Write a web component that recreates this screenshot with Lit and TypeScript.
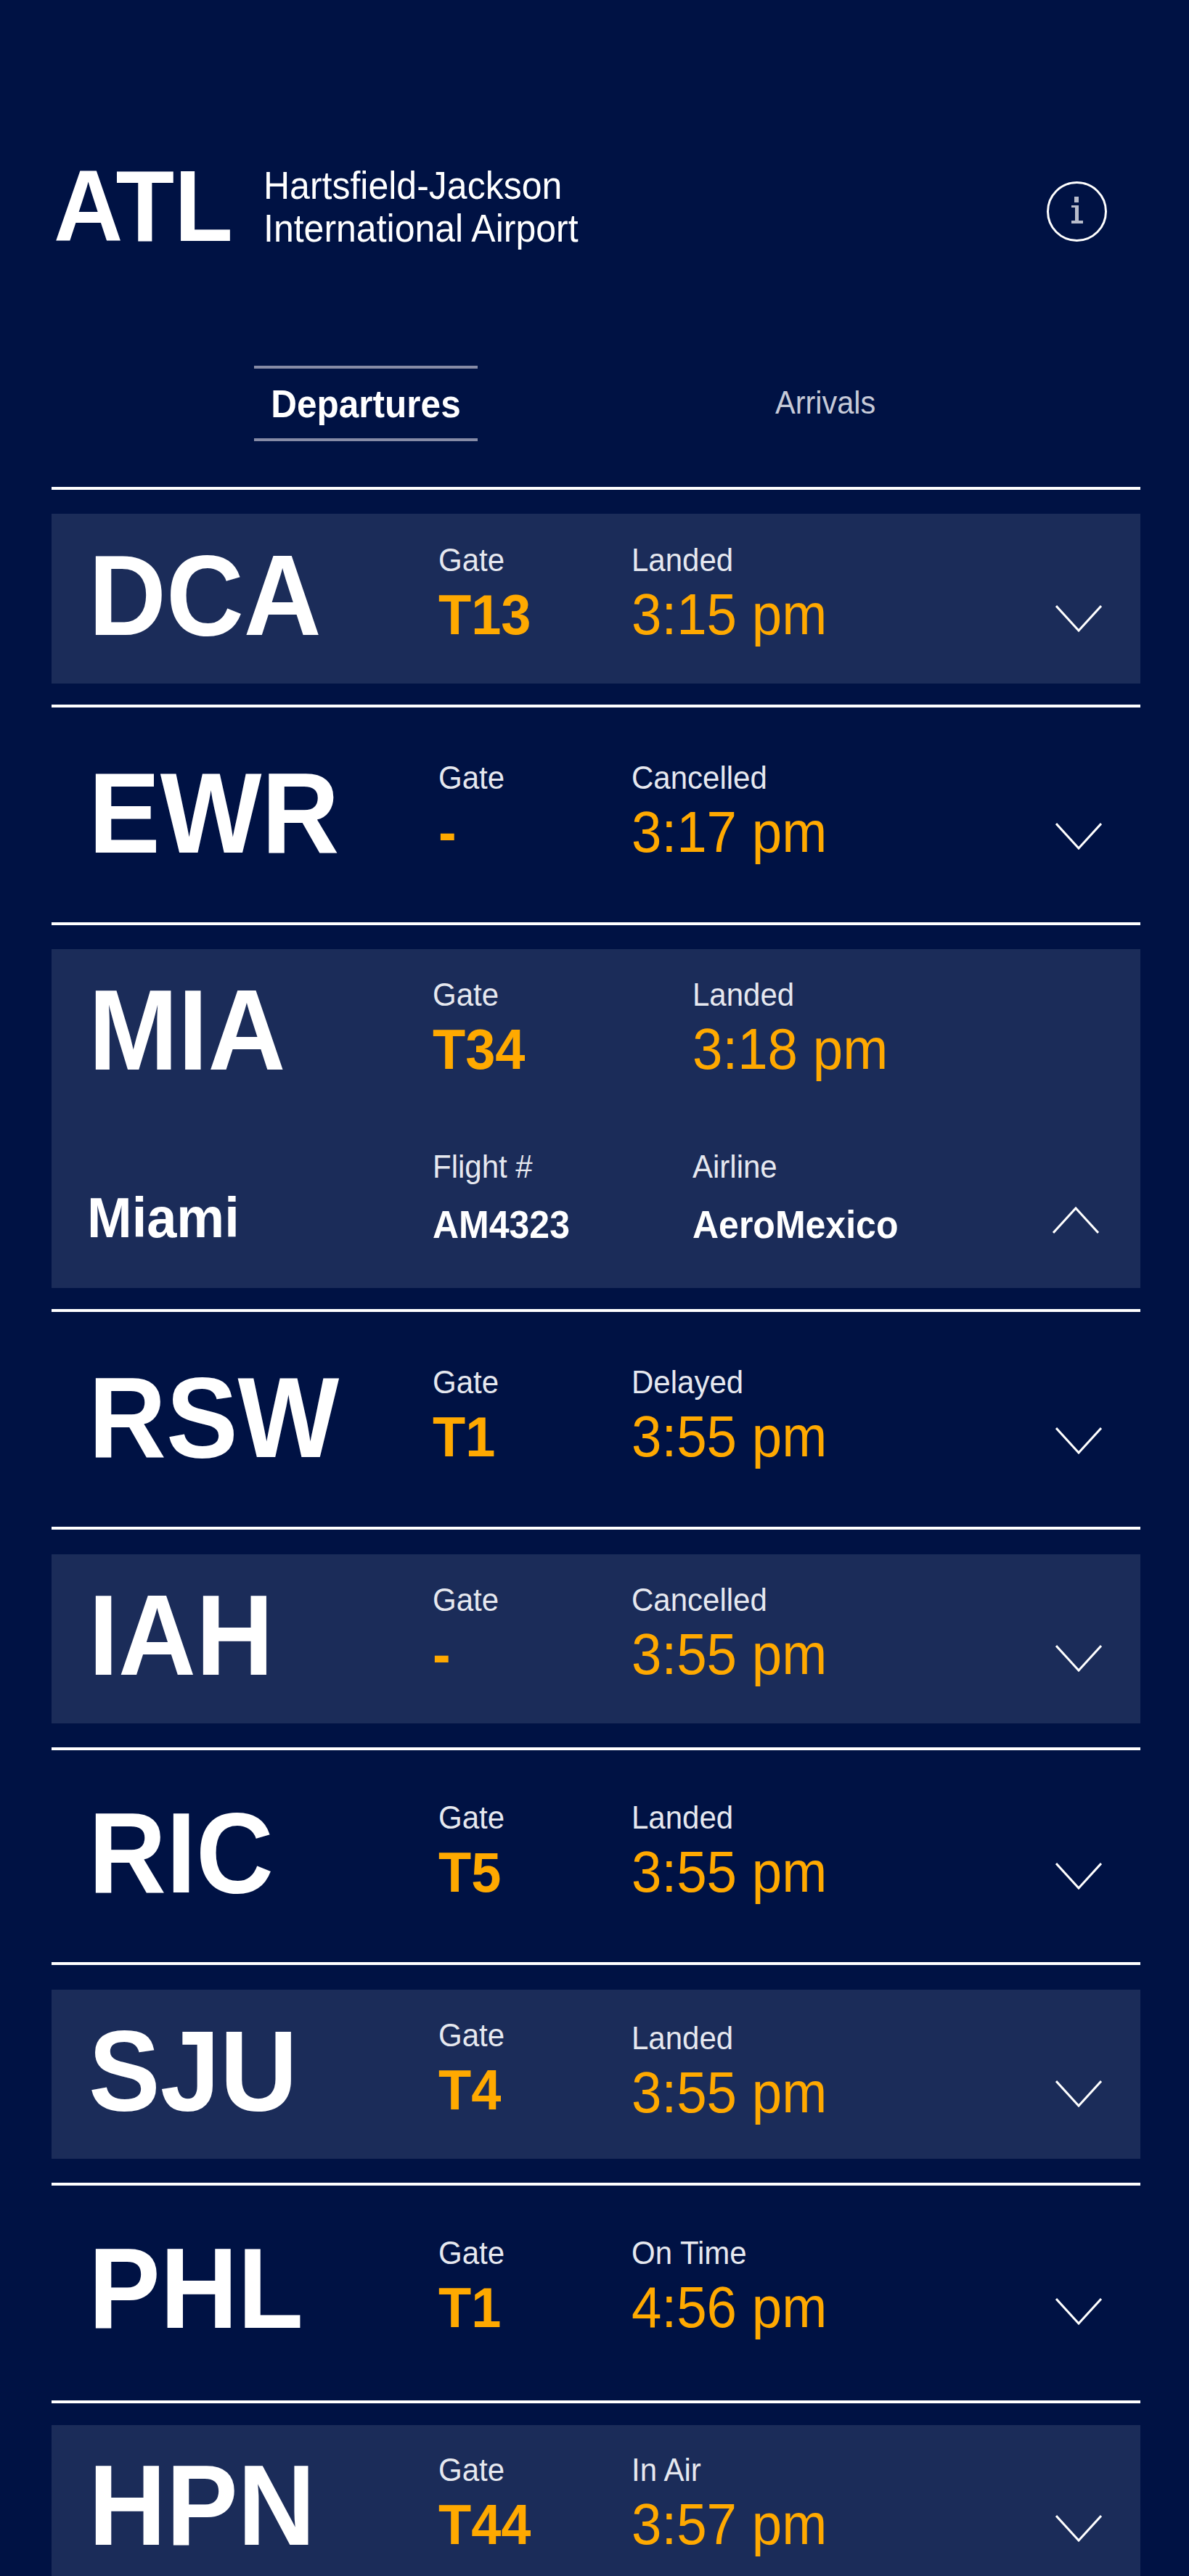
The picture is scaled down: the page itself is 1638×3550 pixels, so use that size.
import { LitElement, html, css, svg } from "lit";
import { customElement } from "lit/decorators.js";

interface Flight {
  code: string; gate: string; status: string; time: string;
  gateX: number; timeX: number; shaded?: boolean;
  h: number; pad: number; dy: number; sdy?: number;
  city?: string; flight?: string; airline?: string;
}

const flights: Flight[] = [
  { code: "DCA", gate: "T13", status: "Landed", time: "3:15 pm", gateX: 604, timeX: 870, shaded: true, h: 300, pad: 33, dy: 0 },
  { code: "EWR", gate: "-", status: "Cancelled", time: "3:17 pm", gateX: 604, timeX: 870, h: 300, pad: 33, dy: 0 },
  { code: "MIA", gate: "T34", status: "Landed", time: "3:18 pm", gateX: 596, timeX: 954, shaded: true, h: 533, pad: 33, dy: -1, city: "Miami", flight: "AM4323", airline: "AeroMexico" },
  { code: "RSW", gate: "T1", status: "Delayed", time: "3:55 pm", gateX: 596, timeX: 870, h: 300, pad: 33, dy: 0 },
  { code: "IAH", gate: "-", status: "Cancelled", time: "3:55 pm", gateX: 596, timeX: 870, shaded: true, h: 304, pad: 34, dy: -1 },
  { code: "RIC", gate: "T5", status: "Landed", time: "3:55 pm", gateX: 604, timeX: 870, h: 296, pad: 33, dy: -4 },
  { code: "SJU", gate: "T4", status: "Landed", time: "3:55 pm", gateX: 604, timeX: 870, shaded: true, h: 304, pad: 34, dy: -1, sdy: 4 },
  { code: "PHL", gate: "T1", status: "On Time", time: "4:56 pm", gateX: 604, timeX: 870, h: 300, pad: 33, dy: -4 },
  { code: "HPN", gate: "T44", status: "In Air", time: "3:57 pm", gateX: 604, timeX: 870, shaded: true, h: 300, pad: 30, dy: -2 },
];

const chevron = (up: boolean) => svg`<svg width="64" height="40" viewBox="0 0 64 40">
  <path d="${up ? "M1 37 L32 3 L63 37" : "M1 3 L32 37 L63 3"}" fill="none" stroke="#fff" stroke-width="3"/></svg>`;

@customElement("app-root")
export class AppRoot extends LitElement {
  static styles = css`
    :host { display: block; height: 100vh; overflow: hidden; background: #001244; color: #fff;
      font-family: "Liberation Sans", Arial, sans-serif; }

    .head { display: flex; align-items: flex-start; padding: 0 112px 0 74px; height: 504px; box-sizing: border-box; }
    .atl { font-size: 132px; font-weight: 700; line-height: 100px; width: 289px; margin-top: 237px;
      transform: scaleY(1.06); transform-origin: 0 96px; }
    .name { flex: 1; margin-top: 228px; }
    .name div { font-size: 50px; line-height: 59px; transform: scaleY(1.07); transform-origin: 0 47px; }
    .info { margin-top: 250px; }

    .tabs { display: flex; height: 167px; align-items: flex-start; }
    .tab-on { margin-left: 350px; width: 308px; height: 104px; box-sizing: border-box; text-align: center;
      border-top: 4px solid #868ba6; border-bottom: 4px solid #868ba6; }
    .tab-on div { font-size: 49.5px; font-weight: 700; line-height: 96px; margin-top: 2px;
      transform: scaleY(1.08); transform-origin: 0 65px; }
    .tab-off { margin-left: 410px; margin-top: 2px; font-size: 41.5px; line-height: 100px; color: #c6cad8;
      transform: scaleY(1.07); transform-origin: 0 65px; }

    .list { margin: 0 67px 0 71px; }
    .row { border-top: 4px solid #fff; box-sizing: border-box; }
    .card { display: grid; grid-template-rows: 234px auto; position: relative; box-sizing: border-box; padding-left: 51px; }
    .card.shaded { background: #1b2c59; }

    .code { font-size: 148px; font-weight: 700; line-height: 100px; margin-top: calc(66px + var(--dy));
      transform: scaleY(1.06); transform-origin: 0 101px; }
    .status { margin-top: var(--sdy); }
    .label { font-size: 42px; line-height: 46px; margin-top: calc(42px + var(--dy)); color: #e6e8ef;
      transform: scaleY(1.07); transform-origin: 0 37px; }
    .gate, .time { line-height: 74px; margin-top: 16px; color: #ffa900; font-size: 74px;
      transform: scaleY(1.06); transform-origin: 0 63px; }
    .gate { font-weight: 700; }
    .time { font-size: 74.5px; }

    .city { font-size: 74px; font-weight: 700; line-height: 80px; margin: 98px 0 0 -2px;
      transform: scaleY(1.05); transform-origin: 0 66px; }
    .lbl2 { margin-top: 44px; }
    .small { font-size: 50px; font-weight: 700; line-height: 56px; margin-top: 29px;
      transform: scaleY(1.07); transform-origin: 0 45px; }

    .chev { position: absolute; right: 53px; top: calc(124px + var(--dy)); line-height: 0; }
    .chev.up { top: 354px; right: 57px; }
  `;

  render() {
    return html`
      <div class="head">
        <div class="atl">ATL</div>
        <div class="name"><div>Hartsfield-Jackson</div><div>International Airport</div></div>
        <svg class="info" width="84" height="84" viewBox="0 0 84 84">
          <circle cx="41.5" cy="41.5" r="40" fill="none" stroke="#fff" stroke-width="3"/>
          <rect x="38" y="21" width="6" height="8" fill="#b8bccb"/>
          <path d="M34 33 H44 V54 H50 V58 H34 V54 H39 V36 H34 Z" fill="#b8bccb"/>
        </svg>
      </div>
      <div class="tabs">
        <div class="tab-on"><div>Departures</div></div>
        <div class="tab-off">Arrivals</div>
      </div>
      <div class="list">
        ${flights.map((f) => {
          const vars = `height:${f.h}px;padding-top:${f.pad}px;--dy:${f.dy}px;--sdy:${f.sdy ?? 0}px`;
          const card = `grid-template-columns:${f.gateX - 122}px ${f.timeX - f.gateX}px 1fr;height:${(f.city ? 500 : 267) - f.pad}px`;
          return html`
            <div class="row" style=${vars}>
              <div class="card ${f.shaded ? "shaded" : ""}" style=${card}>
                <div class="code">${f.code}</div>
                <div>
                  <div class="label">Gate</div>
                  <div class="gate">${f.gate}</div>
                </div>
                <div class="status">
                  <div class="label">${f.status}</div>
                  <div class="time">${f.time}</div>
                </div>
                ${f.city
                  ? html`
                      <div class="city">${f.city}</div>
                      <div>
                        <div class="label lbl2">Flight #</div>
                        <div class="small">${f.flight}</div>
                      </div>
                      <div>
                        <div class="label lbl2">Airline</div>
                        <div class="small">${f.airline}</div>
                      </div>`
                  : ""}
                <div class="chev ${f.city ? "up" : ""}">${chevron(!!f.city)}</div>
              </div>
            </div>`;
        })}
      </div>
    `;
  }
}
